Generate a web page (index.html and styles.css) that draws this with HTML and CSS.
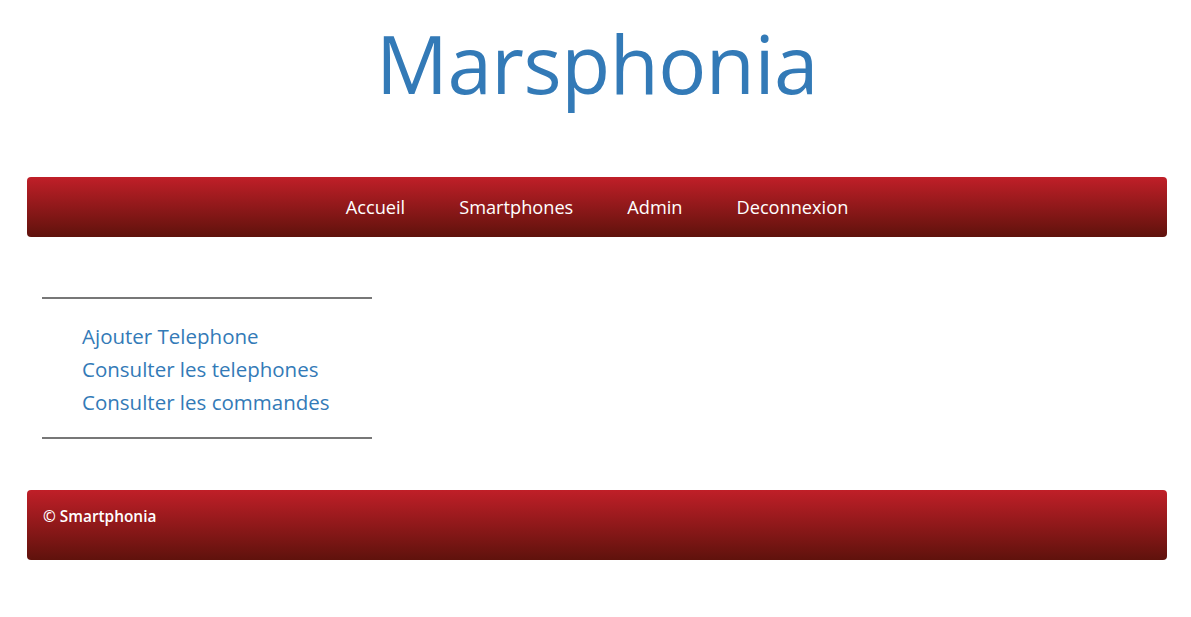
FILE: index.html
```html
<!DOCTYPE html>
<html lang="fr">
<head>
<meta charset="utf-8">
<title>Marsphonia</title>
<link rel="stylesheet" href="styles.css">
</head>
<body>
<div class="page">
  <header class="site-header">
    <h1 class="site-title">Marsphonia</h1>
  </header>
  <nav class="main-nav">
    <a href="#">Accueil</a>
    <a href="#">Smartphones</a>
    <a href="#">Admin</a>
    <a href="#">Deconnexion</a>
  </nav>
  <aside class="side-menu">
    <ul>
      <li><a href="#">Ajouter Telephone</a></li>
      <li><a href="#">Consulter les telephones</a></li>
      <li><a href="#">Consulter les commandes</a></li>
    </ul>
  </aside>
  <footer class="site-footer">© Smartphonia</footer>
</div>
</body>
</html>
```
FILE: styles.css
```css
html, body {
  margin: 0;
  padding: 0;
  background: #fff;
}
body {
  font-family: "Open Sans", "DejaVu Sans", sans-serif;
}
.page {
  padding: 0 24px 0 27px;
}
.site-header {
  height: 177px;
  display: flex;
  justify-content: center;
  align-items: flex-start;
}
.site-title {
  margin: 0;
  padding-top: 8px;
  font-size: 80px;
  line-height: 110px;
  font-weight: 400;
  color: #337ab7;
  letter-spacing: -0.5px;
}
.main-nav {
  height: 60px;
  border-radius: 4px;
  background: linear-gradient(to bottom, #c01f28, #5f120c);
  display: flex;
  justify-content: center;
  align-items: center;
}
.main-nav a {
  color: #fff;
  text-decoration: none;
  font-size: 18.2px;
  padding: 0 27px;
}
.side-menu {
  margin: 60px 0 0 15px;
  width: 330px;
  border-top: 2px solid #777;
  border-bottom: 2px solid #777;
}
.side-menu ul {
  list-style: none;
  margin: 21px 0 18px;
  padding-left: 40px;
  font-size: 20.5px;
  line-height: 33px;
}
.side-menu li {
  line-height: 33px;
}
.side-menu a {
  color: #337ab7;
  text-decoration: none;
}
.site-footer {
  margin-top: 51px;
  height: 70px;
  box-sizing: border-box;
  padding: 17px 16px;
  line-height: 20px;
  border-radius: 4px;
  background: linear-gradient(to bottom, #c01f28, #5f120c);
  color: #fff;
  font-size: 15.4px;
  font-weight: 600;
}
```
